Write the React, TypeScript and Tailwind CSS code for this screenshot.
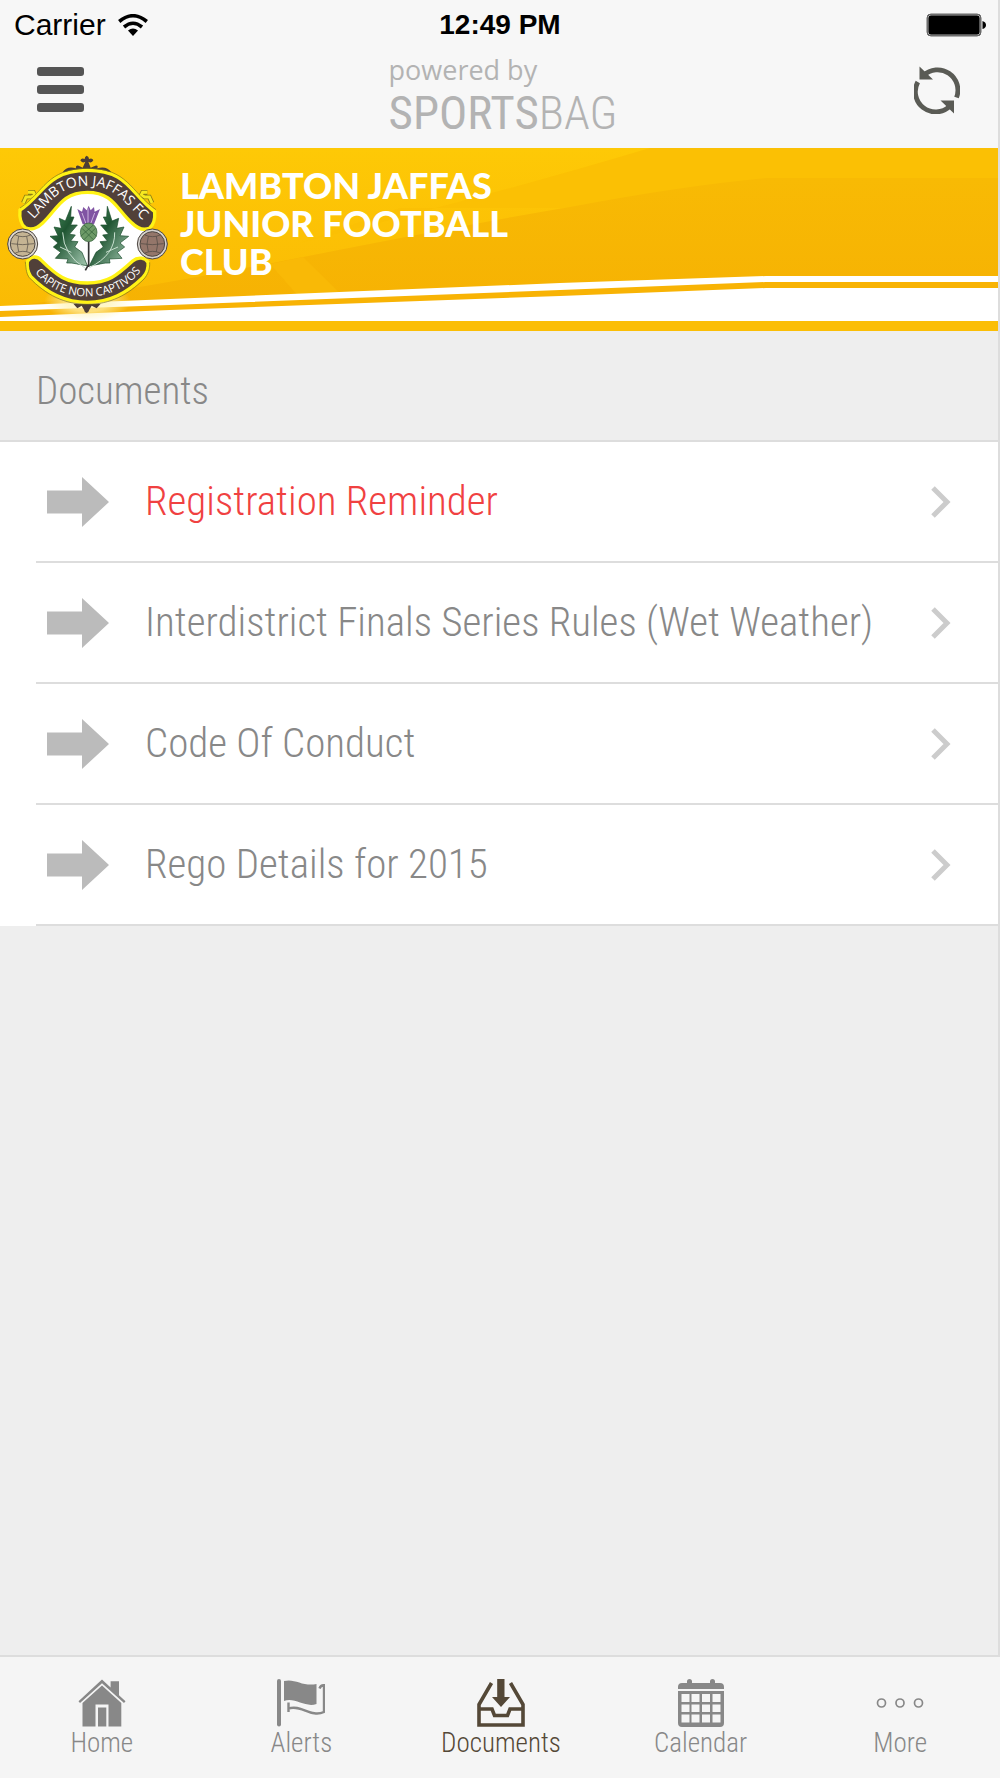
import { useState, type ReactNode } from 'react';

type TabId = 'home' | 'alerts' | 'documents' | 'calendar' | 'more';

const documents = [
  { id: 1, title: 'Registration Reminder', urgent: true },
  { id: 2, title: 'Interdistrict Finals Series Rules (Wet Weather)', urgent: false },
  { id: 3, title: 'Code Of Conduct', urgent: false },
  { id: 4, title: 'Rego Details for 2015', urgent: false },
];

const tabs: { id: TabId; label: string; icon: ReactNode }[] = [
  { id: 'home', label: 'Home', icon: <HomeIcon /> },
  { id: 'alerts', label: 'Alerts', icon: <FlagIcon /> },
  { id: 'documents', label: 'Documents', icon: <InboxIcon /> },
  { id: 'calendar', label: 'Calendar', icon: <CalendarIcon /> },
  { id: 'more', label: 'More', icon: <MoreIcon /> },
];

function HomeIcon() {
  return (
    <svg className="h-12 w-12" viewBox="0 0 48 48" fill="currentColor" aria-hidden="true">
      <path d="M24 .5 32.6 8.500V2.200H41V16.300L47.500 22.200 46 24 24 4.200 2 24 .5 22.200Z" />
      <path d="M24 6.500 43.300 24V47.500H30.500V25.500H17.500V47.500H4.500V24Z" />
      <path d="M20 28.500H28.300V47.500H20Z" />
    </svg>
  );
}

function FlagIcon() {
  return (
    <svg className="h-12 w-12" viewBox="0 0 48 48" fill="currentColor" aria-hidden="true">
      <rect x="0" y="0" width="4" height="47.500" rx="2" />
      <path d="M7 2C18-1 26 8 39.500 5V25C28 29 18 18 7 22Z" />
      <path
        d="M42.500 9.500C43.500 6.500 45 6 47 6.200V33C34 39 24 25 11.500 29.500M11.500 23.500V33"
        fill="none"
        stroke="currentColor"
        strokeWidth="2.400"
      />
    </svg>
  );
}

function InboxIcon() {
  return (
    <svg className="h-12 w-12" viewBox="0 0 48 48" fill="currentColor" aria-hidden="true">
      <path d="M20.200 0H27.500V18H33L24 28 15 18H20.200Z" />
      <path
        d="M14.500 4 2 25.500V46H46V25.500L33.500 4M2 30H15L17.500 36.500H30.500L33 30H46"
        fill="none"
        stroke="currentColor"
        strokeWidth="3.600"
      />
    </svg>
  );
}

function CalendarIcon() {
  return (
    <svg className="h-12 w-12" viewBox="0 0 48 48" fill="currentColor" aria-hidden="true">
      <path d="M1 10V8Q1 4 5 4H10V2.500Q10 0 12.500 0T15 2.500V4H33V2.500Q33 0 35.500 0T38 2.500V4H43Q47 4 47 8V10Z" />
      <path
        fillRule="evenodd"
        d="M1 12H47V44Q47 48 43 48H5Q1 48 1 44ZM4.500 15V23H12.500V15ZM14.500 15V23H22.500V15ZM25 15V23H33V15ZM35.500 15V23H43.500V15ZM4.500 25.500V33H12.500V25.500ZM14.500 25.500V33H22.500V25.500ZM25 25.500V33H33V25.500ZM35.500 25.500V33H43.500V25.500ZM4.500 35.500V43.500H12.500V35.500ZM14.500 35.500V43.500H22.500V35.500ZM25 35.500V43.500H33V35.500ZM35.500 35.500V43.500H43.500V35.500Z"
      />
    </svg>
  );
}

function MoreIcon() {
  return (
    <svg className="h-12 w-12" viewBox="0 0 48 48" fill="none" stroke="currentColor" strokeWidth="1.700" aria-hidden="true">
      <circle cx="5.500" cy="24" r="4" />
      <circle cx="24" cy="24" r="4" />
      <circle cx="42.500" cy="24" r="4" />
    </svg>
  );
}

function Crest() {
  return (
    <svg className="h-[183px] w-[180px] shrink-0" viewBox="0 9 540 549" role="img" aria-label="Lambton Jaffas FC crest">
      <defs>
        <path id="crest-top" d="M106 218C150 170 180 122 262 122S370 170 424 222" />
        <path id="crest-bottom" d="M108 386C150 436 205 454 262 454S372 436 420 382" />
        <radialGradient id="crest-glow">
          <stop offset="0.500" stopColor="#fff3b0" stopOpacity="0.700" />
          <stop offset="1" stopColor="#fff3b0" stopOpacity="0" />
        </radialGradient>
        <linearGradient id="crest-leaf" x1="0" y1="0" x2="1" y2="1">
          <stop offset="0" stopColor="#4f9563" />
          <stop offset="0.400" stopColor="#1f5532" />
          <stop offset="1" stopColor="#a5c9b2" />
        </linearGradient>
      </defs>
      <ellipse cx="262" cy="470" rx="130" ry="60" fill="url(#crest-glow)" />
      {/* finials */}
      <g fill="#4b3d36">
        <path d="M188 82Q200 62 228 70 226 60 236 62L248 68 256 50Q246 56 241 46 244 38 254 42 254 34 260 32 267 34 267 42 277 38 280 46 275 56 265 50L272 68 286 62Q296 60 292 70 320 62 334 82Z" />
        <path d="M220 476H302L290 490 275 482 268 494Q266 502 260 504 253 502 252 494L245 482 232 490Z" />
      </g>
      <path
        d="M70 174 78 156H94M84 142H100L104 150 94 156M456 174 448 156H432M442 142H428L424 150 434 156"
        fill="none"
        stroke="#8b7d16"
        strokeWidth="14"
      />
      <path
        d="M70 174 78 156H94M84 142H100L104 150 94 156M456 174 448 156H432M442 142H428L424 150 434 156"
        fill="none"
        stroke="#f6e920"
        strokeWidth="9"
      />
      <path d="M108 242C150 180 190 140 262 140S374 180 418 242L446 262V330L410 350C370 400 320 414 262 414S150 400 112 350L80 330V262Z" fill="#fff" />
      {/* ribbons */}
      <path d="M60 195C130 150 140 76 262 76S390 145 464 200C466 226 458 242 448 250 428 258 408 246 396 234 350 194 340 142 262 142S170 196 128 234C112 250 92 256 76 248 60 236 58 216 60 195Z" fill="#514039" stroke="#fff315" strokeWidth="10" />
      <path d="M60 189C130 144 140 70 262 70S390 139 468 194" fill="none" stroke="#7a7320" strokeWidth="2" />
      <path d="M82 350C92 332 112 332 124 346 170 392 200 414 262 414S350 392 398 348C414 334 436 338 444 352 446 370 440 386 428 398 380 444 330 472 262 472S140 444 92 394C84 382 80 368 82 350Z" fill="#514039" stroke="#fff315" strokeWidth="10" />
      <path d="M76 350C78 374 80 388 88 398 138 450 194 478 262 478S384 450 432 402C444 388 450 372 449 352" fill="none" stroke="#7a7320" strokeWidth="2" />
      <g fill="#fff" fontFamily="'Open Sans', sans-serif" fontWeight="400">
        <text fontSize="42" textAnchor="middle">
          <textPath href="#crest-top" startOffset="50%">LAMBTON JAFFAS FC</textPath>
        </text>
        <text fontSize="34" textAnchor="middle">
          <textPath href="#crest-bottom" startOffset="50%">CAPITE NON CAPTIVOS</textPath>
        </text>
      </g>
      {/* footballs */}
      <g stroke="#4c4540" strokeWidth="3">
        <circle cx="68" cy="297" r="45" fill="#ddd8d0" />
        <circle cx="68" cy="297" r="37" fill="#c5b493" />
        <path d="M46 270Q68 280 92 270M34 296Q68 302 102 296M46 324Q68 314 92 324M56 274Q48 298 56 320M80 274Q88 298 80 320" fill="none" strokeWidth="2" />
        <circle cx="457" cy="297" r="45" fill="#d6d2ce" />
        <circle cx="457" cy="297" r="37" fill="#94766a" />
        <path d="M435 270Q457 280 481 270M423 296Q457 302 491 296M435 324Q457 314 481 324M445 274Q437 298 445 320M469 274Q477 298 469 320" fill="none" strokeWidth="2" />
      </g>
      {/* thistle */}
      <g fill="url(#crest-leaf)" stroke="#164a28" strokeWidth="2">
        <path d="M262 362C238 360 220 352 200 354L204 342 166 340 182 322 160 306 174 294 150 274 174 272 162 246 184 250 178 220 196 228 214 184 212 216 222 216 212 240 232 240 208 268 226 270 212 288 234 290 224 306 246 322Z" />
        <path d="M268 362C294 360 312 352 330 354L328 342 366 340 352 322 374 306 360 294 386 274 360 272 372 246 350 250 356 220 336 228 322 184 320 216 310 216 322 240 302 240 326 268 308 270 322 288 300 290 310 306 288 322Z" />
      </g>
      <path d="M256 370Q190 330 188 262M268 368Q346 330 344 262M214 322 180 306M318 322 354 306" fill="none" stroke="#c9e0d0" strokeWidth="3" />
      <path d="M232 192 246 200 250 186 260 196 266 182 272 196 282 186 284 200 300 192 282 238H248Z" fill="#8054a3" />
      <path d="M246 204 258 236M264 190V236M284 204 272 236" stroke="#cdb3de" strokeWidth="3" />
      <ellipse cx="266" cy="262" rx="25" ry="28" fill="#6d9a67" stroke="#2d5c35" strokeWidth="2" />
      <path d="M246 250 280 284M252 240 290 274M286 250 252 284M280 240 242 274" stroke="#2d5c35" strokeWidth="2" />
      <path d="M266 290V366M256 376 266 358" stroke="#333" strokeWidth="5" fill="none" />
    </svg>
  );
}

function Banner() {
  return (
    <section className="relative isolate overflow-hidden bg-[#fbbe05]">
      <svg className="absolute inset-0 -z-10 h-full w-full" viewBox="0 0 998 183" preserveAspectRatio="none" aria-hidden="true">
        <defs>
          <linearGradient id="banner-light" x1="0" y1="0" x2="0" y2="1">
            <stop offset="0" stopColor="#fec906" />
            <stop offset="1" stopColor="#fab904" />
          </linearGradient>
          <linearGradient id="banner-dark" x1="0" y1="0" x2="0" y2="1">
            <stop offset="0" stopColor="#f8ba04" />
            <stop offset="1" stopColor="#f6b103" />
          </linearGradient>
        </defs>
        <rect width="998" height="173" fill="url(#banner-light)" />
        <path d="M300 95Q500 45 650 0H998V60H400Z" fill="#fbc004" />
        <path d="M0 160Q120 145 303 109T570 59Q680 38 766 30H998V173H0Z" fill="url(#banner-dark)" />
        <path d="M270 116 303 109 345 150H300Z" fill="#f9b906" />
        <path d="M0 158 170 151 560 135 766 128H998V173H0Z" fill="#fff" />
        <path d="M0 163 170 157 560 142 766 134H998V140H766L560 148 170 162 0 169Z" fill="#f8b304" />
        <rect y="173" width="998" height="10" fill="#fbbe05" />
      </svg>
      <div className="flex items-start">
        <Crest />
        <h1 className="pt-[18px] font-[Lato] text-[36px] leading-[38px] font-black text-white">
          LAMBTON JAFFAS
          <br />
          JUNIOR FOOTBALL
          <br />
          CLUB
        </h1>
      </div>
    </section>
  );
}

export default function App() {
  const [activeTab, setActiveTab] = useState<TabId>('documents');

  return (
    <div className="flex min-h-screen flex-col bg-[#eee] font-['Roboto_Condensed',Roboto,sans-serif] font-light text-[#888]">
      <div className="flex flex-1 flex-col border-r-2 border-[#ddd]">
        <header className="bg-[#f7f7f7]">
          {/* Status bar */}
          <div className="grid grid-cols-3 items-center pt-2 pr-3 pl-[14px] font-['Liberation_Sans',sans-serif] text-[30px] leading-[34px] font-normal text-black">
            <div className="flex items-center gap-3">
              <span>Carrier</span>
              <svg className="h-[22px] w-[30px]" viewBox="0 0 30 22" fill="none" stroke="#000" strokeWidth="3.600" aria-label="Wi-Fi">
                <path d="M1.200 7.500Q15-4 28.800 7.500M6 13Q15 5.500 24 13" />
                <path d="M10 16.500Q15 12.500 20 16.500L15 22Z" fill="#000" stroke="none" />
              </svg>
            </div>
            <span className="text-center text-[28px] font-bold">12:49 PM</span>
            <svg className="h-6 w-[60px] justify-self-end" viewBox="0 0 60 24" aria-label="Battery full">
              <rect x="1" y="1" width="54" height="22" rx="4" fill="#000" stroke="#666" strokeWidth="1" />
              <rect x="2" y="2" width="52" height="20" rx="3" fill="none" stroke="#aaa" strokeWidth="1" />
              <path d="M56.500 8Q60 9 60 12T56.500 16Z" fill="#000" />
            </svg>
          </div>

          {/* Nav bar */}
          <div className="flex h-[106px] items-start justify-between pr-[38px] pl-[37px]">
            <button aria-label="Menu" className="flex flex-col gap-[9px] pt-[25px]">
              <span className="h-[9px] w-[47px] rounded-[3px] bg-[#555]" />
              <span className="h-[9px] w-[47px] rounded-[3px] bg-[#555]" />
              <span className="h-[9px] w-[47px] rounded-[3px] bg-[#555]" />
            </button>
            <div className="flex flex-col pt-3 pl-2 text-[#b3b3b3]">
              <span className="font-['Open_Sans'] text-[27px] leading-[32px] font-normal">powered by</span>
              <span className="text-[47px] leading-[54px]">
                <span className="font-normal">SPORTS</span>BAG
              </span>
            </div>
            <button aria-label="Refresh" className="pt-6">
              <svg className="h-12 w-[46px]" viewBox="0 0 46 48" fill="none" stroke="#5a5b55" strokeWidth="4.800">
                <path d="M9.500 9.500A20.300 20.300 0 0 1 42.500 31.500" />
                <path d="M3.800 16A20.300 20.300 0 0 0 35.500 40.500" />
                <path d="M5.500 .5V13.500H19ZM40 47.500V34.500H26.500Z" fill="#5a5b55" stroke="none" />
              </svg>
            </button>
          </div>
        </header>

        <Banner />

        <main>
          <h2 className="border-b-2 border-[#ddd] px-9 pt-9 pb-[25px] text-[39px] leading-[48px]">Documents</h2>
          <ul className="bg-white">
            {documents.map((doc) => (
              <li key={doc.id} className="ml-9 border-b-2 border-[#ddd]">
                <a href="#" className="flex h-[119px] items-center gap-9 pr-[47px] pl-[11px]">
                  <svg className="h-[50px] w-[62px] shrink-0" viewBox="0 0 62 50" fill="#bbb" aria-hidden="true">
                    <path d="M0 13.500H35V0L62 25 35 50V36.500H0Z" />
                  </svg>
                  <span className={`flex-1 pb-0.5 text-[41px] leading-[48px] ${doc.urgent ? 'text-[#f04141]' : 'text-[#888]'}`}>
                    {doc.title}
                  </span>
                  <svg className="h-8 w-5 shrink-0" viewBox="0 0 20 32" fill="none" stroke="#ccc" strokeWidth="5" aria-hidden="true">
                    <path d="M2 2 16 16 2 30" />
                  </svg>
                </a>
              </li>
            ))}
          </ul>
        </main>
      </div>

      {/* Tab bar */}
      <nav className="grid h-[123px] grid-cols-5 border-t-2 border-[#ddd] bg-[#f5f5f5] pl-0.5">
        {tabs.map((tab) => (
          <button
            key={tab.id}
            onClick={() => setActiveTab(tab.id)}
            className={`flex flex-col items-center pt-[22px] text-[27px] leading-[32px] ${
              activeTab === tab.id ? 'text-[#544837]' : 'text-[#888]'
            }`}
          >
            {tab.icon}
            {tab.label}
          </button>
        ))}
      </nav>
    </div>
  );
}
